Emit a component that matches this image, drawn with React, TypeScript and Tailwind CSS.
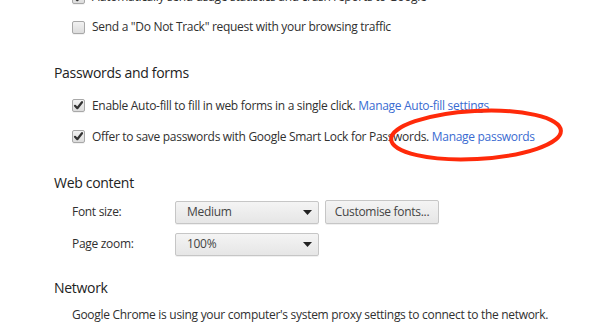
import React from "react";

const font = { fontFamily: '"Open Sans", "Noto Sans", sans-serif' };

function Checkbox({ checked }: { checked?: boolean }) {
  return (
    <div className="relative w-[13px] h-[13px] shrink-0 rounded-[2px] border border-[#a8a8a8] bg-gradient-to-b from-[#f2f2f2] to-[#dcdcdc] shadow-[0_1px_0_rgba(0,0,0,0.05)]">
      {checked && (
        <svg viewBox="0 0 13 13" className="absolute -left-px -top-px w-[13px] h-[13px]">
          <path d="M3 6.8 L5.3 9.2 L10 3.2" fill="none" stroke="#333" strokeWidth="2.2" strokeLinecap="round" strokeLinejoin="round" />
        </svg>
      )}
    </div>
  );
}

function CheckRow({ checked, children, h }: { checked?: boolean; children: React.ReactNode; h: string }) {
  return (
    <div className={`flex items-center gap-[7px] pl-[18px] ${h}`}>
      <Checkbox checked={checked} />
      <span className="text-[12px] tracking-[-0.3px] text-[#303030] whitespace-nowrap leading-none">{children}</span>
    </div>
  );
}

function Select({ value }: { value: string }) {
  return (
    <div className="flex items-center justify-between w-[144px] h-[23px] rounded-[2px] border border-[#c6c6c6] bg-gradient-to-b from-[#f4f4f4] to-[#e6e6e6] pl-[11px] pr-[6px] shadow-[0_1px_0_rgba(0,0,0,0.06)]">
      <span className="text-[12px] tracking-[-0.3px] text-[#444] leading-none">{value}</span>
      <svg width="9" height="5" viewBox="0 0 9 5">
        <path d="M0 0 H9 L4.5 5 Z" fill="#222" />
      </svg>
    </div>
  );
}

export default function App() {
  return (
    <div className="relative w-[615px] h-[328px] overflow-hidden bg-white" style={font}>
      <div className="flex flex-col pl-[54px] mt-[-18px]">
        <CheckRow checked h="h-[30px]">
          Automatically send usage statistics and crash reports to Google
        </CheckRow>
        <CheckRow h="h-[30px]">Send a "Do Not Track" request with your browsing traffic</CheckRow>

        <div className="mt-[21px] h-[20px] flex items-center text-[14px] tracking-[-0.3px] text-[#222] leading-none">Passwords and forms</div>

        <div className="mt-[7px]">
          <CheckRow checked h="h-[31px]">
            Enable Auto-fill to fill in web forms in a single click.{" "}
            <span className="text-[#3a6bd1]">Manage Auto-fill settings</span>
          </CheckRow>
          <CheckRow checked h="h-[31px]">
            Offer to save passwords with Google Smart Lock for Passwords.{" "}
            <span className="text-[#3a6bd1]">Manage passwords</span>
          </CheckRow>
        </div>

        <div className="mt-[21px] h-[20px] flex items-center text-[14px] tracking-[-0.3px] text-[#222] leading-none">Web content</div>

        <div className="mt-[7px] h-[24px] flex items-center pl-[18px]">
          <span className="w-[103px] text-[12px] tracking-[-0.3px] text-[#303030] leading-none">Font size:</span>
          <Select value="Medium" />
          <div className="ml-[6px] h-[24px] w-[114px] flex items-center justify-center rounded-[2px] border border-[#c6c6c6] bg-gradient-to-b from-[#f4f4f4] to-[#e6e6e6] text-[12px] tracking-[-0.3px] text-[#444] leading-none shadow-[0_1px_0_rgba(0,0,0,0.06)]">
            Customise fonts...
          </div>
        </div>
        <div className="mt-[8px] h-[24px] flex items-center pl-[18px]">
          <span className="w-[103px] text-[12px] tracking-[-0.3px] text-[#303030] leading-none">Page zoom:</span>
          <Select value="100%" />
        </div>

        <div className="mt-[22px] h-[20px] flex items-center text-[14px] tracking-[-0.3px] text-[#222] leading-none">Network</div>
        <div className="mt-[7px] h-[20px] flex items-center pl-[18px] text-[12px] tracking-[-0.3px] text-[#303030] leading-none whitespace-nowrap">
          Google Chrome is using your computer's system proxy settings to connect to the network.
        </div>
      </div>

      <svg className="absolute left-0 top-0 pointer-events-none" width="615" height="328">
        <ellipse cx="476" cy="135" rx="85" ry="24" fill="none" stroke="#ff2a0a" strokeWidth="4" transform="rotate(-3 476 135)" />
      </svg>
    </div>
  );
}
